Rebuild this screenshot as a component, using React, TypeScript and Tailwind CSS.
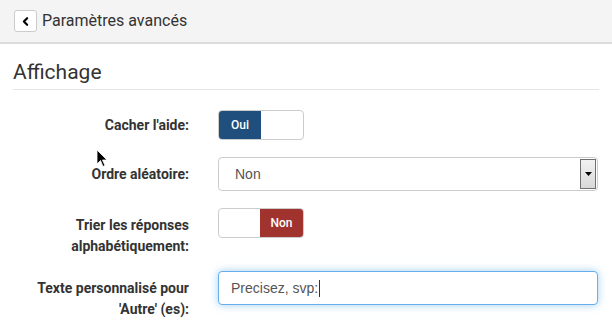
import { ChevronLeft } from "lucide-react"

function Switch({ on }: { on: boolean }) {
  return (
    <div className="flex h-[30px] w-[86px] overflow-hidden rounded-[4px] border border-[#cccccc] bg-white font-['Roboto',sans-serif] text-[12px] font-medium">
      {on ? (
        <>
          <span className="flex w-[43px] items-center justify-center bg-[#214f7d] text-white">Oui</span>
          <span className="w-[43px]" />
        </>
      ) : (
        <>
          <span className="w-[42px]" />
          <span className="flex w-[44px] items-center justify-center bg-[#a0332e] text-white">Non</span>
        </>
      )}
    </div>
  )
}

function Row({ label, top, pt, children }: { label: React.ReactNode; top: string; pt: string; children: React.ReactNode }) {
  return (
    <div className={`flex items-start ${top}`}>
      <label className={`w-[189px] shrink-0 text-right text-[14px] font-bold leading-[21px] text-[#333333] ${pt}`}>{label}</label>
      <div className="ml-[29px] w-[380px]">{children}</div>
    </div>
  )
}

export default function App() {
  return (
    <div className="relative h-[321px] w-[612px] overflow-hidden bg-white font-['Roboto',sans-serif] text-[#333333]">
      <div className="flex h-[44px] items-start border-b-2 border-[#dcdcdc] bg-[#f4f4f4] pl-[14px] pt-[10px]">
        <button className="flex h-[22px] w-[23px] items-center justify-center rounded-[3px] border border-[#cccccc] bg-white">
          <ChevronLeft className="h-[13px] w-[13px] text-black" strokeWidth={4} />
        </button>
        <h1 className="ml-[5px] text-[16px] leading-[22px] text-[#333333]">Paramètres avancés</h1>
      </div>

      <div className="px-[13px]">
        <h2 className="mt-[15px] border-b border-[#e5e5e5] pb-[3px] text-[21px] font-normal leading-[27px] text-[#333333]">Affichage</h2>
      </div>

      <Row label="Cacher l'aide:" top="mt-[20px]" pt="pt-[5px]">
        <Switch on />
      </Row>

      <Row label="Ordre aléatoire:" top="mt-[17px]" pt="pt-[7px]">
        <div className="flex h-[34px] items-stretch rounded-[4px] border border-[#cccccc] bg-white font-['Liberation_Sans',Arial,sans-serif] text-[14px] text-[#555555]">
          <span className="flex flex-1 items-center pl-[16px]">Non</span>
          <span className="m-[1px] flex w-[16px] items-center justify-center border border-[#707070] bg-gradient-to-b from-[#f2f2f2] to-[#d8d8d8]">
            <svg width="7" height="4" viewBox="0 0 7 4"><path d="M0 0h7L3.5 4z" fill="#000" /></svg>
          </span>
        </div>
      </Row>

      <Row
        label={<>Trier les réponses<br />alphabétiquement:</>}
        top="mt-[17px]"
        pt="pt-[7px]"
      >
        <Switch on={false} />
      </Row>

      <Row
        label={<>Texte personnalisé pour<br />'Autre' (es):</>}
        top="mt-[14px]"
        pt="pt-[7px]"
      >
        <div className="flex h-[34px] items-center rounded-[4px] border border-[#66afe9] bg-white pl-[12px] font-['Liberation_Sans',Arial,sans-serif] text-[14px] text-[#555555] shadow-[0_0_8px_rgba(102,175,233,0.6)]">
          Precisez, svp:<span className="ml-[1px] h-[17px] w-px bg-[#333]" />
        </div>
      </Row>

      <svg className="absolute left-[96px] top-[149px]" width="12" height="19" viewBox="0 0 12 19">
        <path d="M1 1v14l3.5-3.5 2.5 6 2-1-2.5-5.5H11z" fill="#000" stroke="#fff" strokeWidth="0.8" />
      </svg>
    </div>
  )
}
